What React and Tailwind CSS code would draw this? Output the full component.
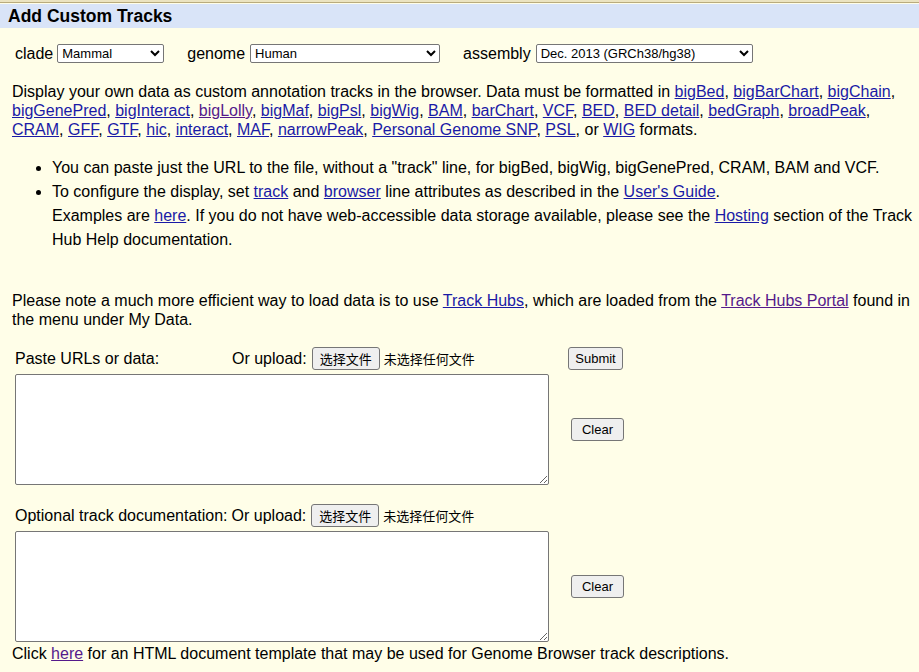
const Link = ({ children, visited }) => (
  <a href="#" className={visited ? "text-[#551a8b] underline" : "text-[#1a1aa6] underline"}>
    {children}
  </a>
);

const formats = [
  "bigBed", "bigBarChart", "bigChain", "bigGenePred", "bigInteract", "bigLolly", "bigMaf",
  "bigPsl", "bigWig", "BAM", "barChart", "VCF", "BED", "BED detail", "bedGraph", "broadPeak",
  "CRAM", "GFF", "GTF", "hic", "interact", "MAF", "narrowPeak", "Personal Genome SNP", "PSL",
];

const FileUpload = () => (
  <span className="inline-flex items-center">
    <span>Or upload:</span>
    <button className="ml-[5px] h-[23px] px-[7px] border border-[#767676] rounded-[3px] bg-[#efefef] text-[13px] font-['Noto_Sans_CJK_SC',sans-serif] leading-none">
      选择文件
    </button>
    <span className="ml-[4px] text-[13px] font-['Noto_Sans_CJK_SC',sans-serif]">未选择任何文件</span>
  </span>
);

const Btn = ({ children, className }) => (
  <button className={"h-[23px] border border-[#767676] rounded-[3px] bg-[#efefef] text-[13px] leading-none " + className}>
    {children}
  </button>
);

export default function App() {
  return (
    <div className="min-h-screen bg-[#fffee8] text-black text-[16px] font-['Liberation_Sans',Arial,sans-serif]">
      <div className="h-[2px] bg-[#ebe3c0]" />
      <div className="h-px bg-[#b9ab7d]" />
      <div className="h-[24px] mt-px bg-[#d9e4f8] px-2 flex items-center">
        <h1 className="font-bold text-[17.5px] leading-none pt-[2px]">Add Custom Tracks</h1>
      </div>

      <div className="flex items-center pl-[15px] mt-[16px] h-[19px]">
        <span>clade</span>
        <select className="ml-[4px] w-[107px] h-[19px] text-[13px] border border-[#767676] rounded-[2px] bg-white">
          <option>Mammal</option>
        </select>
        <span className="ml-[23px]">genome</span>
        <select className="ml-[5px] w-[190px] h-[19px] text-[13px] border border-[#767676] rounded-[2px] bg-white">
          <option>Human</option>
        </select>
        <span className="ml-[23px]">assembly</span>
        <select className="ml-[5px] w-[217px] h-[19px] text-[13px] border border-[#767676] rounded-[2px] bg-white">
          <option>Dec. 2013 (GRCh38/hg38)</option>
        </select>
      </div>

      <p className="px-3 mt-[19px] leading-[19px]">
        Display your own data as custom annotation tracks in the browser. Data must be formatted in{" "}
        {formats.map((f) => (
          <span key={f}>
            <Link visited={f === "bigLolly"}>{f}</Link>,{" "}
          </span>
        ))}
        or <Link>WIG</Link> formats.
      </p>

      <ul className="list-disc pl-[52px] pr-1 mt-[17px] leading-[24px]">
        <li>
          You can paste just the URL to the file, without a "track" line, for bigBed, bigWig, bigGenePred, CRAM, BAM and VCF.
        </li>
        <li>
          To configure the display, set <Link>track</Link> and <Link>browser</Link> line attributes as described in the{" "}
          <Link>User's Guide</Link>.
          <br />
          Examples are <Link>here</Link>. If you do not have web-accessible data storage available, please see the{" "}
          <Link>Hosting</Link> section of the Track Hub Help documentation.
        </li>
      </ul>

      <p className="pl-3 pr-1 mt-[39px] leading-[19px]">
        Please note a much more efficient way to load data is to use <Link>Track Hubs</Link>, which are loaded from the{" "}
        <Link visited>Track Hubs Portal</Link> found in the menu under My Data.
      </p>

      <div className="grid grid-cols-[553px_auto] pl-[15px] mt-[17px]">
        <div className="flex items-center h-[23px] pt-[2px]">
          <span className="w-[217px]">Paste URLs or data:</span>
          <FileUpload />
        </div>
        <div>
          <Btn className="w-[55px]">Submit</Btn>
        </div>
        <textarea className="mt-[4px] w-[534px] h-[111px] border border-[#767676] rounded-[2px] bg-white" />
        <div className="flex items-center pl-[3px] mt-[4px]">
          <Btn className="w-[53px]">Clear</Btn>
        </div>

        <div className="flex items-center h-[23px] mt-[19px]">
          <span className="mr-[4px]">Optional track documentation:</span>
          <FileUpload />
        </div>
        <div />
        <textarea className="mt-[4px] w-[534px] h-[111px] border border-[#767676] rounded-[2px] bg-white" />
        <div className="flex items-center pl-[3px] mt-[4px]">
          <Btn className="w-[53px]">Clear</Btn>
        </div>
      </div>

      <p className="px-3 mt-[2px] leading-[19px]">
        Click <Link visited>here</Link> for an HTML document template that may be used for Genome Browser track descriptions.
      </p>
    </div>
  );
}
